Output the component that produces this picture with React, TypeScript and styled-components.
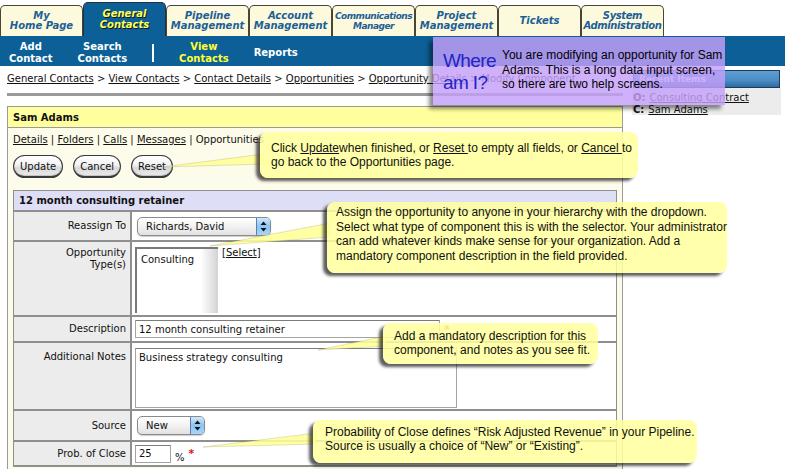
import React from "react";
import styled, { createGlobalStyle } from "styled-components";

const GlobalStyle = createGlobalStyle`
  html, body { margin: 0; padding: 0; background: #fff; }
  body { font-family: "DejaVu Sans", Verdana, sans-serif; font-size: 10px; color: #111; }
  * { box-sizing: border-box; }
`;

const Page = styled.div`
  position: relative;
  width: 785px;
  height: 469px;
  overflow: hidden;
  background: #fff;
`;

/* ---------- top tabs ---------- */
const TabRow = styled.div`
  display: flex;
  align-items: flex-end;
  height: 36px;
`;

const Tab = styled.div<{ $active?: boolean; $ls?: number; $size?: number }>`
  width: 83px;
  height: ${(p) => (p.$active ? 34 : 31)}px;
  border: 1px solid ${(p) => (p.$active ? "#22313f" : "#4a4636")};
  border-bottom: none;
  border-radius: 5px 5px 0 0;
  background: ${(p) => (p.$active ? "#0d5f97" : "#fdf9dc")};
  color: ${(p) => (p.$active ? "#ffff5c" : "#1b6097")};
  text-shadow: ${(p) => (p.$active ? "1px 1px 0 #151515" : "none")};
  font-family: "DejaVu Sans", Verdana, sans-serif;
  font-style: italic;
  font-weight: bold;
  font-size: ${(p) => p.$size ?? 10}px;
  line-height: 10.5px;
  letter-spacing: ${(p) => p.$ls ?? 0}px;
  display: flex;
  align-items: center;
  justify-content: center;
  text-align: center;
  white-space: nowrap;
`;

/* ---------- blue sub nav ---------- */
const SubNav = styled.div`
  height: 30px;
  background: #0d5f97;
  display: flex;
  align-items: center;
  gap: 25px;
  padding: 3px 0 0 9px;
`;

const NavItem = styled.div<{ $current?: boolean }>`
  font-weight: bold;
  font-size: 10px;
  line-height: 12px;
  color: ${(p) => (p.$current ? "#ffff33" : "#ffffff")};
  text-align: center;
  white-space: nowrap;
`;

const NavSep = styled.div`
  width: 2px;
  height: 18px;
  background: #ffffff;
`;

/* ---------- body ---------- */
const Body = styled.div`
  display: flex;
  align-items: flex-start;
`;

const MainCol = styled.div`
  width: 623px;
  padding-left: 7px;
`;

const Crumbs = styled.div`
  margin-top: 7px;
  height: 12px;
  line-height: 12px;
  white-space: nowrap;
  color: #222;
`;

const ULink = styled.span`
  text-decoration: underline;
  color: #111;
`;

const Rule = styled.div`
  margin-top: 8px;
  height: 3px;
  background: #9a9a9a;
`;

const Panel = styled.div`
  margin-top: 10px;
  border: 1px solid #9a9a9a;
  border-bottom: none;
  background: #fdfbe9;
  height: 400px;
`;

const PanelHeader = styled.div`
  height: 21px;
  background: #ffff9e;
  border-bottom: 1px solid #9a9a9a;
  font-weight: bold;
  line-height: 21px;
  padding-left: 5px;
`;

const PanelInner = styled.div`
  padding: 0 5px;
`;

const LinksRow = styled.div`
  height: 24px;
  line-height: 24px;
  white-space: nowrap;
  color: #111;
`;

const ButtonRow = styled.div`
  margin-top: 3px;
  display: flex;
  gap: 10px;
`;

const Pill = styled.button`
  height: 23px;
  padding: 0 6px;
  border: 1px solid #3a3a3a;
  border-bottom-width: 2px;
  border-radius: 12px;
  background: linear-gradient(#ffffff 0%, #f3f3f3 45%, #d8d8d8 60%, #ececec 100%);
  box-shadow: inset 0 -1px 1px rgba(0, 0, 0, 0.18);
  font-family: "DejaVu Sans", Verdana, sans-serif;
  font-size: 10px;
  color: #111;
`;

const Table = styled.div`
  margin-top: 12px;
  border-left: 1px solid #8f8f8f;
  border-right: 1px solid #8f8f8f;
`;

const TableHeader = styled.div`
  height: 22px;
  border-top: 1px solid #8f8f8f;
  border-bottom: 2px solid #8f8f8f;
  background: #dedef6;
  font-weight: bold;
  line-height: 19px;
  padding-left: 5px;
`;

const Row = styled.div<{ $h: number }>`
  display: grid;
  grid-template-columns: 118px 1fr;
  height: ${(p) => p.$h}px;
  border-bottom: 2px solid #8f8f8f;
`;

const Label = styled.div<{ $top?: number }>`
  background: #ececec;
  border-right: 2px solid #8f8f8f;
  padding-right: 4px;
  padding-top: ${(p) => p.$top ?? 0}px;
  display: flex;
  justify-content: flex-end;
  align-items: ${(p) => (p.$top !== undefined ? "flex-start" : "center")};
  text-align: right;
  line-height: 12px;
  color: #111;
`;

const Value = styled.div<{ $top?: number }>`
  background: #ffffff;
  padding-left: 3px;
  padding-top: ${(p) => p.$top ?? 0}px;
  display: flex;
  align-items: ${(p) => (p.$top !== undefined ? "flex-start" : "center")};
  gap: 4px;
`;

const FakeSelect = styled.div<{ $w: number }>`
  margin-left: 2px;
  width: ${(p) => p.$w}px;
  height: 19px;
  border: 1px solid #8a8a8a;
  border-radius: 5px;
  background: linear-gradient(#ffffff, #f2f2f2 50%, #e2e2e2);
  box-shadow: 0 1px 1px rgba(0, 0, 0, 0.2);
  display: flex;
  align-items: center;
  padding-left: 8px;
  overflow: hidden;
`;

const SelectText = styled.span`
  flex: 1;
  white-space: nowrap;
`;

const SelectArrow = styled.div`
  width: 14px;
  height: 100%;
  border-left: 1px solid #5b7fae;
  background: linear-gradient(#cfe8fd, #8cc4f4 50%, #a9d6fb);
  display: flex;
  align-items: center;
  justify-content: center;
`;

const ListBox = styled.div`
  width: 83px;
  height: 66px;
  border-top: 2px solid #7a7a7a;
  border-left: 2px solid #7a7a7a;
  display: flex;
  background: #fff;
`;

const ListText = styled.div`
  flex: 1;
  padding: 5px 0 0 4px;
`;

const ScrollTrack = styled.div`
  width: 16px;
  background: linear-gradient(90deg, #fbfbfb, #e4e4e4 60%, #d2d2d2);
`;

const TextInput = styled.input<{ $w: number }>`
  width: ${(p) => p.$w}px;
  height: 18px;
  border: 1px solid #a4a4a4;
  border-top-color: #7c7c7c;
  padding: 0 3px;
  font-family: "DejaVu Sans", Verdana, sans-serif;
  font-size: 10px;
  color: #111;
  background: #fff;
`;

const TextArea = styled.textarea`
  width: 322px;
  height: 60px;
  border: 1px solid #a4a4a4;
  border-top-color: #7c7c7c;
  padding: 3px 3px;
  resize: none;
  font-family: "DejaVu Sans", Verdana, sans-serif;
  font-size: 10px;
  color: #111;
`;

const Req = styled.span`
  color: #e01010;
  font-weight: bold;
  font-size: 11px;
`;

const Pct = styled.span`
  align-self: flex-end;
  padding-bottom: 2px;
`;

/* ---------- sidebar ---------- */
const SideCol = styled.div`
  margin-left: 9px;
  width: 149px;
  padding-top: 4px;
`;

const RecentHeader = styled.div`
  height: 18px;
  margin: 0 1px;
  border: 1px solid #1c3c5c;
  background: linear-gradient(#5d9ed4, #4a8cc4 60%, #2d6aa0);
  color: #fff;
  font-weight: bold;
  font-size: 9px;
  line-height: 16px;
  padding-left: 5px;
`;

const RecentList = styled.div`
  background: #ececec;
  height: 27px;
  padding-top: 4px;
  padding-left: 1px;
`;

const RecentItem = styled.div`
  line-height: 12px;
  white-space: nowrap;
`;

const Tag = styled.b`
  margin-right: 4px;
`;

/* ---------- overlays ---------- */
const WhereBox = styled.div`
  position: absolute;
  left: 433px;
  top: 37px;
  width: 292px;
  height: 68px;
  background: rgba(196, 160, 250, 0.82);
  box-shadow: -4px 4px 4px rgba(0, 0, 0, 0.45);
  display: flex;
  align-items: flex-start;
  padding-left: 10px;
  overflow: hidden;
`;

const WhereTitle = styled.div`
  width: 59px;
  margin-top: 13px;
  font-family: "Liberation Sans", Arial, sans-serif;
  font-size: 19px;
  line-height: 22px;
  letter-spacing: -0.6px;
  color: #2323c8;
`;

const WhereText = styled.div`
  margin-top: 11px;
  font-family: "Liberation Sans", Arial, sans-serif;
  font-size: 12px;
  line-height: 14.5px;
  color: #000;
  white-space: nowrap;
`;

const Callout = styled.div<{ $x: number; $y: number; $w: number; $h: number; $pt: number; $pl: number; $lh?: number }>`
  position: absolute;
  left: ${(p) => p.$x}px;
  top: ${(p) => p.$y}px;
  width: ${(p) => p.$w}px;
  height: ${(p) => p.$h}px;
  padding: ${(p) => p.$pt}px 0 0 ${(p) => p.$pl}px;
  background: rgba(255, 255, 158, 0.86);
  border-radius: 8px;
  box-shadow: -4px 3px 3px rgba(30, 30, 30, 0.72);
  font-family: "Liberation Sans", Arial, sans-serif;
  font-size: 12px;
  line-height: ${(p) => p.$lh ?? 14}px;
  color: #111;
  white-space: nowrap;
`;

const CU = styled.span`
  text-decoration: underline;
`;

const Pointers = styled.svg`
  position: absolute;
  left: 0;
  top: 0;
  pointer-events: none;
`;

function Arrow() {
  return (
    <SelectArrow>
      <svg width="7" height="11" viewBox="0 0 7 11">
        <path d="M3.5 0.5 L6.5 4 L0.5 4 Z" fill="#111" />
        <path d="M3.5 10.5 L6.5 7 L0.5 7 Z" fill="#111" />
      </svg>
    </SelectArrow>
  );
}

export default function App() {
  return (
    <>
      <GlobalStyle />
      <Page>
        <TabRow>
          <Tab>My<br />Home Page</Tab>
          <Tab $active>General<br />Contacts</Tab>
          <Tab>Pipeline<br />Management</Tab>
          <Tab>Account<br />Management</Tab>
          <Tab $size={9} $ls={-0.5}>Communications<br />Manager</Tab>
          <Tab>Project<br />Management</Tab>
          <Tab>Tickets</Tab>
          <Tab $ls={-0.4}>System<br />Administration</Tab>
        </TabRow>

        <SubNav>
          <NavItem>Add<br />Contact</NavItem>
          <NavItem>Search<br />Contacts</NavItem>
          <NavSep />
          <NavItem $current>View<br />Contacts</NavItem>
          <NavItem>Reports</NavItem>
        </SubNav>

        <Body>
          <MainCol>
            <Crumbs>
              <ULink>General Contacts</ULink> &gt; <ULink>View Contacts</ULink> &gt;{" "}
              <ULink>Contact Details</ULink> &gt; <ULink>Opportunities</ULink> &gt;{" "}
              <ULink>Opportunity Details</ULink> &gt; Modify Component
            </Crumbs>
            <Rule />
            <Panel>
              <PanelHeader>Sam Adams</PanelHeader>
              <PanelInner>
                <LinksRow>
                  <ULink>Details</ULink> | <ULink>Folders</ULink> | <ULink>Calls</ULink> |{" "}
                  <ULink>Messages</ULink> | Opportunities
                </LinksRow>
                <ButtonRow>
                  <Pill>Update</Pill>
                  <Pill>Cancel</Pill>
                  <Pill>Reset</Pill>
                </ButtonRow>
                <Table>
                  <TableHeader>12 month consulting retainer</TableHeader>
                  <Row $h={30}>
                    <Label>Reassign To</Label>
                    <Value>
                      <FakeSelect $w={134}>
                        <SelectText>Richards, David</SelectText>
                        <Arrow />
                      </FakeSelect>
                    </Value>
                  </Row>
                  <Row $h={75}>
                    <Label $top={5}>Opportunity<br />Type(s)</Label>
                    <Value $top={5}>
                      <ListBox>
                        <ListText>Consulting</ListText>
                        <ScrollTrack />
                      </ListBox>
                      <span>
                        [<ULink>Select</ULink>]
                      </span>
                    </Value>
                  </Row>
                  <Row $h={26}>
                    <Label>Description</Label>
                    <Value>
                      <TextInput $w={305} readOnly value="12 month consulting retainer" />
                      <Req>*</Req>
                    </Value>
                  </Row>
                  <Row $h={68}>
                    <Label $top={8}>Additional Notes</Label>
                    <Value $top={5}>
                      <TextArea readOnly value="Business strategy consulting" />
                    </Value>
                  </Row>
                  <Row $h={31}>
                    <Label>Source</Label>
                    <Value>
                      <FakeSelect $w={68}>
                        <SelectText>New</SelectText>
                        <Arrow />
                      </FakeSelect>
                    </Value>
                  </Row>
                  <Row $h={25}>
                    <Label>Prob. of Close</Label>
                    <Value>
                      <TextInput $w={36} readOnly value="25" />
                      <Pct>%</Pct>
                      <Req>*</Req>
                    </Value>
                  </Row>
                </Table>
              </PanelInner>
            </Panel>
          </MainCol>

          <SideCol>
            <RecentHeader>Recent Items</RecentHeader>
            <RecentList>
              <RecentItem>
                <Tag>O:</Tag>
                <ULink>Consulting Contract</ULink>
              </RecentItem>
              <RecentItem>
                <Tag>C:</Tag>
                <ULink>Sam Adams</ULink>
              </RecentItem>
            </RecentList>
          </SideCol>
        </Body>

        <Pointers width="785" height="469" viewBox="0 0 785 469">
          <g fill="rgba(255,255,150,0.88)" stroke="rgba(120,120,60,0.35)" strokeWidth="0.6">
            <polygon points="163,167 264,154 264,164" />
            <polygon points="210,246 330,223 330,237" />
            <polygon points="318,350 386,336 386,346" />
            <polygon points="203,447 316,433 316,444" />
          </g>
        </Pointers>

        <Callout $x={260} $y={132} $w={378} $h={46} $pt={9} $pl={11}>
          Click <CU>Update</CU>when finished, or <CU>Reset </CU>to empty all fields, or <CU>Cancel </CU>to
          <br />
          go back to the Opportunities page.
        </Callout>

        <Callout $x={327} $y={202} $w={400} $h={71} $pt={3} $pl={9} $lh={14.6}>
          Assign the opportunity to anyone in your hierarchy with the dropdown.
          <br />
          Select what type of component this is with the selector. Your administrator
          <br />
          can add whatever kinds make sense for your organization. Add a
          <br />
          mandatory component description in the field provided.
        </Callout>

        <Callout $x={383} $y={323} $w={215} $h={41} $pt={6} $pl={11}>
          Add a mandatory description for this
          <br />
          component, and notes as you see fit.
        </Callout>

        <Callout $x={313} $y={420} $w={384} $h={43} $pt={5} $pl={12}>
          Probability of Close defines “Risk Adjusted Revenue” in your Pipeline.
          <br />
          Source is usually a choice of “New” or “Existing”.
        </Callout>

        <WhereBox>
          <WhereTitle>
            Where
            <br />
            am I?
          </WhereTitle>
          <WhereText>
            You are modifying an opportunity for Sam
            <br />
            Adams. This is a long data input screen,
            <br />
            so there are two help screens.
          </WhereText>
        </WhereBox>
      </Page>
    </>
  );
}
